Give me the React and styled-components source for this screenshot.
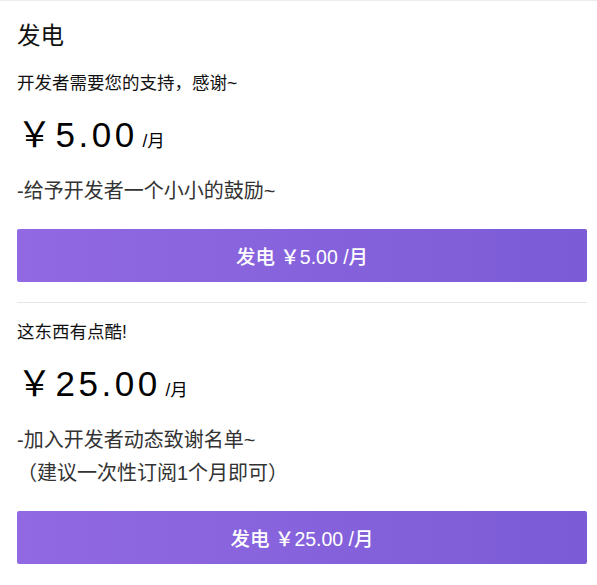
import React from "react";
import styled, { createGlobalStyle } from "styled-components";

const Global = createGlobalStyle`
  html, body { margin: 0; padding: 0; background: #fff; }
  body { font-family: "Liberation Sans", "Noto Sans CJK SC", sans-serif; }
`;

const Page = styled.div`
  border-top: 1px solid #ececec;
  padding: 18px 10px 20px 17px;
  color: #000;
`;

const Title = styled.h1`
  margin: 0;
  font-size: 23.5px;
  font-weight: normal;
  line-height: 35px;
  color: #111;
`;

const Section = styled.section`
  display: flex;
  flex-direction: column;
  padding-top: 16px;
`;

const Subtitle = styled.div`
  font-size: 17.5px;
  line-height: 26px;
  color: #111;
`;

const Price = styled.div`
  margin-top: 18px;
  font-size: 35px;
  line-height: 42px;
  letter-spacing: 3.5px;
  color: #000;
`;

const Unit = styled.span`
  font-size: 17.5px;
  line-height: 1;
  letter-spacing: 0;
`;

const Desc = styled.div`
  margin-top: 19px;
  font-size: 20px;
  line-height: 33px;
  color: #333;
`;

const Button = styled.button`
  margin-top: 21px;
  height: 53px;
  width: 100%;
  border: none;
  border-radius: 2px;
  background: linear-gradient(to right, #9169e2, #7b5cd6);
  color: #fff;
  font-family: inherit;
  font-size: 19.5px;
  font-weight: 500;
  cursor: pointer;
`;

const Divider = styled.hr`
  margin: 20px 0 0;
  border: none;
  border-top: 1px solid #e6e6e6;
  height: 0;
`;

const plans = [
  {
    sub: "开发者需要您的支持，感谢~",
    amount: "5.00",
    desc: ["-给予开发者一个小小的鼓励~"],
  },
  {
    sub: "这东西有点酷!",
    amount: "25.00",
    desc: ["-加入开发者动态致谢名单~", "（建议一次性订阅1个月即可）"],
  },
];

export default function App() {
  return (
    <>
      <Global />
      <Page>
        <Title>发电</Title>
        {plans.map((p, i) => (
          <React.Fragment key={p.amount}>
            {i > 0 && <Divider />}
            <Section>
              <Subtitle>{p.sub}</Subtitle>
              <Price>
                ￥{p.amount}
                <Unit> /月</Unit>
              </Price>
              <Desc>
                {p.desc.map((d, j) => (
                  <div key={j}>{d}</div>
                ))}
              </Desc>
              <Button>发电 ￥{p.amount} /月</Button>
            </Section>
          </React.Fragment>
        ))}
      </Page>
    </>
  );
}
